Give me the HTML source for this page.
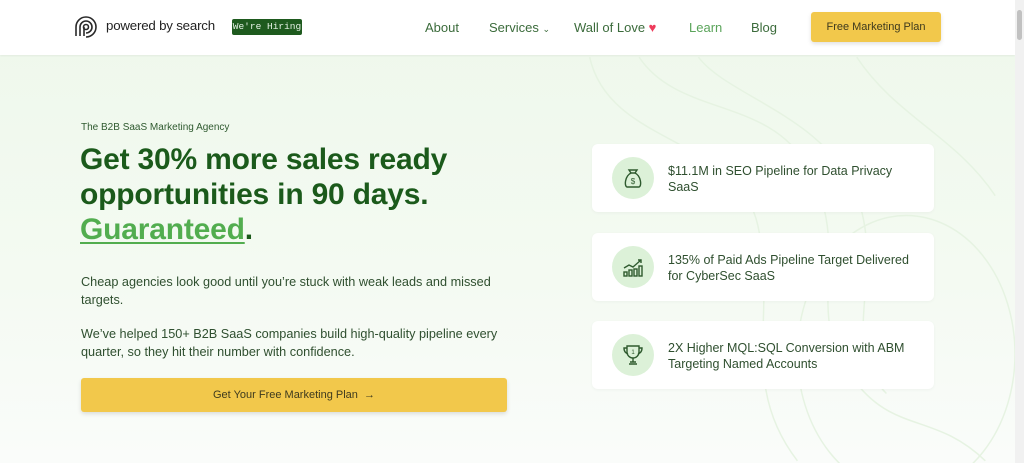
<!DOCTYPE html>
<html style="overflow:hidden;width:1024px;height:463px"><head><meta charset="utf-8"><style>
*{margin:0;padding:0;box-sizing:border-box}
body{width:1024px;height:463px;overflow:hidden;font-family:"Liberation Sans",sans-serif;background:linear-gradient(180deg,#eef8eb 0%,#f4faf2 60%,#fafcfa 100%);position:relative}
.hdr{position:absolute;left:0;top:0;width:1015px;height:55px;background:#fff;box-shadow:0 1px 2px rgba(0,0,0,.06)}
.sb{position:absolute;right:0;top:0;width:9px;height:463px;background:#f1f1f1}
.sb i{position:absolute;left:2px;top:10px;width:5px;height:30px;background:#c1c1c1;border-radius:3px}
.nav{position:absolute;top:20px;font-size:13px;color:#3b6b3b}
.btn{position:absolute;background:#f2c84b;border-radius:3px;box-shadow:0 2px 4px rgba(0,0,0,.12);color:#3e3a1e;font-size:11px;display:flex;align-items:center;justify-content:center}
.card{position:absolute;left:592px;width:342px;height:68px;background:#fff;border-radius:6px;box-shadow:0 1px 3px rgba(0,0,0,.04)}
.card .ic{position:absolute;left:20px;top:13px;width:42px;height:42px;border-radius:50%;background:#dcf1d8}
.card .ic svg{position:absolute;left:9px;top:9px}
.card p{position:absolute;left:76px;top:19px;font-size:12.5px;line-height:16px;color:#2f4f2f;width:250px}
</style></head><body>
<svg style="position:absolute;left:560px;top:55px" width="455" height="408" viewBox="0 0 460 408" fill="none" stroke="#e6f3e2" stroke-width="1.5">
<path d="M80 0 C120 60 210 40 250 110 C300 200 240 260 300 330 C340 380 380 360 430 408"/>
<path d="M140 0 C170 40 270 60 300 140 C330 220 280 290 330 340"/>
<ellipse cx="350" cy="300" rx="110" ry="140"/>
<path d="M30 0 C50 90 180 80 200 170 C220 260 180 330 240 408"/>
<path d="M300 0 C340 60 400 80 440 140"/>
</svg>
<div class="hdr"></div>
<div class="sb"><i></i></div>
<svg style="position:absolute;left:73px;top:14px" width="26" height="26" viewBox="0 0 26 26" fill="none" stroke="#2a2a2a" stroke-width="1.6"><path d="M3 22 V13 A10 10 0 1 1 13 23"/><path d="M7 22 V13 A6 6 0 1 1 13 19"/><circle cx="13" cy="13" r="2.5"/><path d="M11 22 V13"/></svg>
<div style="position:absolute;left:106px;top:18px;font-size:13.3px;color:#222;letter-spacing:-.2px">powered by search</div>
<div style="position:absolute;left:232px;top:19px;width:70px;height:16px;background:#1e5a1e;border-radius:2px;color:#e6f2e6;font-family:'Liberation Mono',monospace;font-size:9.5px;line-height:16px;text-align:center">We're Hiring</div>
<div class="nav" style="left:425px">About</div>
<div class="nav" style="left:489px">Services <span style="font-size:9px">&#8964;</span></div>
<div class="nav" style="left:574px">Wall of Love <span style="color:#ee3b5b">&#9829;</span></div>
<div class="nav" style="left:689px;color:#5aa45a">Learn</div>
<div class="nav" style="left:751px">Blog</div>
<div class="btn" style="left:811px;top:12px;width:130px;height:30px">Free Marketing Plan</div>
<div style="position:absolute;left:81px;top:122px;font-size:10px;color:#2f5a2f">The B2B SaaS Marketing Agency</div>
<div style="position:absolute;left:80px;top:142px;font-size:30px;font-weight:bold;line-height:35px;color:#1b5a1b;letter-spacing:-.2px">Get 30% more sales ready<br>opportunities in 90 days.<br><span style="color:#52ad4f;text-decoration:underline;text-decoration-thickness:2px;text-underline-offset:3px">Guaranteed</span>.</div>
<div style="position:absolute;left:81px;top:273px;font-size:12.7px;line-height:18px;color:#2f4f2f;width:440px">Cheap agencies look good until you’re stuck with weak leads and missed targets.</div>
<div style="position:absolute;left:81px;top:325px;font-size:12.7px;line-height:18px;color:#2f4f2f;width:440px">We’ve helped 150+ B2B SaaS companies build high-quality pipeline every quarter, so they hit their number with confidence.</div>
<div class="btn" style="left:81px;top:378px;width:426px;height:34px">Get Your Free Marketing Plan &nbsp;&rarr;</div>
<div class="card" style="top:144px"><div class="ic"><svg width="24" height="24" viewBox="0 0 24 24" fill="none" stroke="#2e5a2e" stroke-width="1.4"><path d="M8 4 L10 7 H14 L16 4 Z"/><path d="M10 7 C4 10 3 20 6 21 H18 C21 20 20 10 14 7"/><text x="12" y="18" font-size="8" text-anchor="middle" fill="#2e5a2e" stroke="none">$</text></svg></div><p>$11.1M in SEO Pipeline for Data Privacy SaaS</p></div>
<div class="card" style="top:233px"><div class="ic"><svg width="24" height="24" viewBox="0 0 24 24" fill="none" stroke="#2e5a2e" stroke-width="1.4"><path d="M3 13 L8 10 L12 12 L20 5"/><path d="M17 5 H20 V8"/><rect x="3" y="17" width="3" height="4"/><rect x="8" y="15" width="3" height="6"/><rect x="13" y="14" width="3" height="7"/><rect x="18" y="11" width="3" height="10"/></svg></div><p>135% of Paid Ads Pipeline Target Delivered for CyberSec SaaS</p></div>
<div class="card" style="top:321px"><div class="ic"><svg width="24" height="24" viewBox="0 0 24 24" fill="none" stroke="#2e5a2e" stroke-width="1.4"><path d="M6 3 H18 V9 A6 6 0 0 1 6 9 Z"/><path d="M6 5 H3 C3 9 5 10 7 11"/><path d="M18 5 H21 C21 9 19 10 17 11"/><path d="M12 15 V19 M8 21 H16 M9 19 H15"/><text x="12" y="11" font-size="6" text-anchor="middle" fill="#2e5a2e" stroke="none">1</text></svg></div><p>2X Higher MQL:SQL Conversion with ABM Targeting Named Accounts</p></div>
</body></html>
